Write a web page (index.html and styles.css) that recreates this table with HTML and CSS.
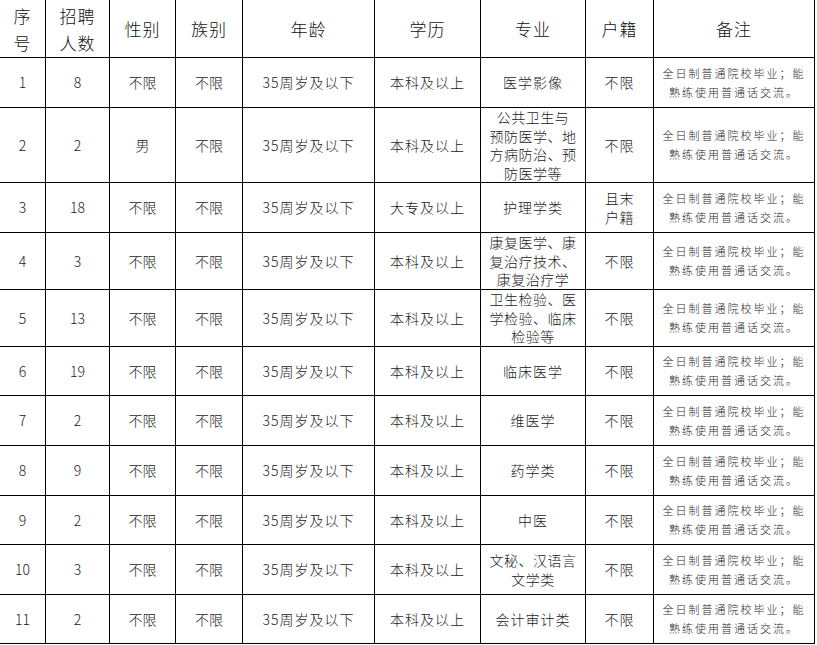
FILE: index.html
```html
<!DOCTYPE html>
<html lang="zh-CN">
<head>
<meta charset="utf-8">
<title>招聘岗位表</title>
<link rel="stylesheet" href="styles.css">
</head>
<body>
<table class="posts">
  <colgroup>
    <col class="c-no"><col class="c-num"><col class="c-sex"><col class="c-eth"><col class="c-age"><col class="c-edu"><col class="c-major"><col class="c-reg"><col class="c-note">
  </colgroup>
  <thead>
    <tr class="h58">
      <th>序<br>号</th><th>招聘<br>人数</th><th>性别</th><th>族别</th><th>年龄</th><th>学历</th><th>专业</th><th>户籍</th><th>备注</th>
    </tr>
  </thead>
  <tbody>
    <tr class="h50"><td>1</td><td>8</td><td>不限</td><td>不限</td><td class="sp">35周岁及以下</td><td class="sp">本科及以上</td><td class="sp">医学影像</td><td class="sp">不限</td><td class="note">全日制普通院校毕业；能<br>熟练使用普通话交流。</td></tr>
    <tr class="h75"><td>2</td><td>2</td><td>男</td><td>不限</td><td class="sp">35周岁及以下</td><td class="sp">本科及以上</td><td class="major">公共卫生与<br>预防医学、地<br>方病防治、预<br>防医学等</td><td class="sp">不限</td><td class="note">全日制普通院校毕业；能<br>熟练使用普通话交流。</td></tr>
    <tr class="h50"><td>3</td><td>18</td><td>不限</td><td>不限</td><td class="sp">35周岁及以下</td><td class="sp">大专及以上</td><td class="sp">护理学类</td><td class="major">且末<br>户籍</td><td class="note">全日制普通院校毕业；能<br>熟练使用普通话交流。</td></tr>
    <tr class="h57"><td>4</td><td>3</td><td>不限</td><td>不限</td><td class="sp">35周岁及以下</td><td class="sp">本科及以上</td><td class="major">康复医学、康<br>复治疗技术、<br>康复治疗学</td><td class="sp">不限</td><td class="note">全日制普通院校毕业；能<br>熟练使用普通话交流。</td></tr>
    <tr class="h57"><td>5</td><td>13</td><td>不限</td><td>不限</td><td class="sp">35周岁及以下</td><td class="sp">本科及以上</td><td class="major">卫生检验、医<br>学检验、临床<br>检验等</td><td class="sp">不限</td><td class="note">全日制普通院校毕业；能<br>熟练使用普通话交流。</td></tr>
    <tr class="h49"><td>6</td><td>19</td><td>不限</td><td>不限</td><td class="sp">35周岁及以下</td><td class="sp">本科及以上</td><td class="sp">临床医学</td><td class="sp">不限</td><td class="note">全日制普通院校毕业；能<br>熟练使用普通话交流。</td></tr>
    <tr class="h50"><td>7</td><td>2</td><td>不限</td><td>不限</td><td class="sp">35周岁及以下</td><td class="sp">本科及以上</td><td class="sp">维医学</td><td class="sp">不限</td><td class="note">全日制普通院校毕业；能<br>熟练使用普通话交流。</td></tr>
    <tr class="h50"><td>8</td><td>9</td><td>不限</td><td>不限</td><td class="sp">35周岁及以下</td><td class="sp">本科及以上</td><td class="sp">药学类</td><td class="sp">不限</td><td class="note">全日制普通院校毕业；能<br>熟练使用普通话交流。</td></tr>
    <tr class="h49"><td>9</td><td>2</td><td>不限</td><td>不限</td><td class="sp">35周岁及以下</td><td class="sp">本科及以上</td><td class="sp">中医</td><td class="sp">不限</td><td class="note">全日制普通院校毕业；能<br>熟练使用普通话交流。</td></tr>
    <tr class="h50"><td>10</td><td>3</td><td>不限</td><td>不限</td><td class="sp">35周岁及以下</td><td class="sp">本科及以上</td><td class="major">文秘、汉语言<br>文学类</td><td class="sp">不限</td><td class="note">全日制普通院校毕业；能<br>熟练使用普通话交流。</td></tr>
    <tr class="h49"><td>11</td><td>2</td><td>不限</td><td>不限</td><td class="sp">35周岁及以下</td><td class="sp">本科及以上</td><td class="sp">会计审计类</td><td class="sp">不限</td><td class="note">全日制普通院校毕业；能<br>熟练使用普通话交流。</td></tr>
  </tbody>
</table>
</body>
</html>
```

FILE: styles.css
```css
html, body {
  margin: 0;
  padding: 0;
  background: #ffffff;
}

body {
  font-family: "Noto Sans CJK SC", "Noto Sans", sans-serif;
  color: #1a1a1a;
  overflow: hidden;
}

.posts {
  border-collapse: collapse;
  table-layout: fixed;
  width: 816px;
  margin: -1px 0 0 -1px;
}

.c-no { width: 46px; }
.c-num { width: 64px; }
.c-sex { width: 66px; }
.c-eth { width: 67px; }
.c-age { width: 132px; }
.c-edu { width: 106px; }
.c-major { width: 105px; }
.c-reg { width: 68px; }
.c-note { width: 161px; }

.posts th,
.posts td {
  border: 1px solid #000;
  padding: 0;
  text-align: center;
  vertical-align: middle;
  overflow: hidden;
}

.posts th {
  font-size: 17px;
  font-weight: 300;
  line-height: 27px;
  letter-spacing: 1px;
  color: #111;
}

.posts td {
  font-size: 14px;
  font-weight: 300;
  line-height: 19px;
}

.posts td.sp {
  letter-spacing: 1px;
}

.posts td.major {
  line-height: 18.5px;
  letter-spacing: 0.5px;
}

.posts td.note {
  font-size: 11px;
  letter-spacing: 2px;
  line-height: 19px;
  color: #2a2a2a;
}

.h58 th { height: 57px; }
.h50 td { height: 49px; }
.h49 td { height: 48px; }
.h57 td { height: 56px; }
.h75 td { height: 74px; }
```
